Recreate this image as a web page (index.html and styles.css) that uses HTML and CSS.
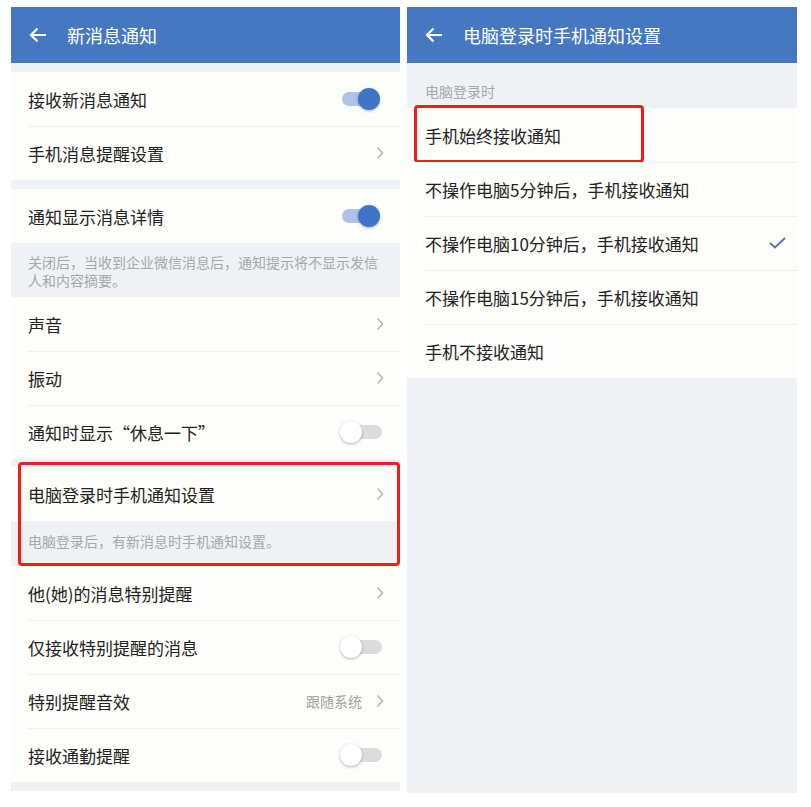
FILE: index.html
```html
<!DOCTYPE html>
<html lang="zh-CN">
<head>
    <meta charset="UTF-8">
    <title>新消息通知</title>
    <link rel="stylesheet" href="styles.css">
</head>
<body>
<div class="screens">

    <section class="phone phone-left">
        <header class="bar">
            <svg class="back" width="18" height="16" viewBox="0 0 18 16"><path d="M17 8H2M8.5 1.5L2 8l6.5 6.5" fill="none" stroke="#fff" stroke-width="2.2"/></svg>
            <span>新消息通知</span>
        </header>

        <div class="group">
            <div class="row"><span>接收新消息通知</span><span class="switch on"></span></div>
            <div class="row"><span>手机消息提醒设置</span><svg class="chev" width="8" height="14" viewBox="0 0 8 14"><path d="M1.5 1.5L6.5 7l-5 5.5" fill="none" stroke="#b8b8b8" stroke-width="1.5"/></svg></div>
        </div>

        <div class="group">
            <div class="row"><span>通知显示消息详情</span><span class="switch on"></span></div>
            <p class="note">关闭后，当收到企业微信消息后，通知提示将不显示发信人和内容摘要。</p>
            <div class="row"><span>声音</span><svg class="chev" width="8" height="14" viewBox="0 0 8 14"><path d="M1.5 1.5L6.5 7l-5 5.5" fill="none" stroke="#b8b8b8" stroke-width="1.5"/></svg></div>
            <div class="row"><span>振动</span><svg class="chev" width="8" height="14" viewBox="0 0 8 14"><path d="M1.5 1.5L6.5 7l-5 5.5" fill="none" stroke="#b8b8b8" stroke-width="1.5"/></svg></div>
            <div class="row"><span>通知时显示“休息一下”</span><span class="switch"></span></div>
        </div>

        <div class="group marked">
            <div class="row"><span>电脑登录时手机通知设置</span><svg class="chev" width="8" height="14" viewBox="0 0 8 14"><path d="M1.5 1.5L6.5 7l-5 5.5" fill="none" stroke="#b8b8b8" stroke-width="1.5"/></svg></div>
            <p class="note note-short">电脑登录后，有新消息时手机通知设置。</p>
        </div>

        <div class="group flush">
            <div class="row"><span>他(她)的消息特别提醒</span><svg class="chev" width="8" height="14" viewBox="0 0 8 14"><path d="M1.5 1.5L6.5 7l-5 5.5" fill="none" stroke="#b8b8b8" stroke-width="1.5"/></svg></div>
            <div class="row"><span>仅接收特别提醒的消息</span><span class="switch"></span></div>
            <div class="row"><span>特别提醒音效</span><span class="value">跟随系统<svg class="chev" width="8" height="14" viewBox="0 0 8 14"><path d="M1.5 1.5L6.5 7l-5 5.5" fill="none" stroke="#b8b8b8" stroke-width="1.5"/></svg></span></div>
            <div class="row"><span>接收通勤提醒</span><span class="switch"></span></div>
        </div>
    </section>

    <section class="phone phone-right">
        <header class="bar">
            <svg class="back" width="18" height="16" viewBox="0 0 18 16"><path d="M17 8H2M8.5 1.5L2 8l6.5 6.5" fill="none" stroke="#fff" stroke-width="2.2"/></svg>
            <span>电脑登录时手机通知设置</span>
        </header>

        <p class="label">电脑登录时</p>
        <div class="group flush">
            <div class="row marked-row"><span>手机始终接收通知</span></div>
            <div class="row"><span>不操作电脑5分钟后，手机接收通知</span></div>
            <div class="row"><span>不操作电脑10分钟后，手机接收通知</span><svg class="check" width="17" height="12" viewBox="0 0 17 12"><path d="M1 6l5 4.5L16 1" fill="none" stroke="#4a74b6" stroke-width="1.8"/></svg></div>
            <div class="row"><span>不操作电脑15分钟后，手机接收通知</span></div>
            <div class="row"><span>手机不接收通知</span></div>
        </div>
    </section>

</div>
</body>
</html>
```

FILE: styles.css
```css
body {
    margin: 0;
    background-color: #fff;
    font-family: "Noto Sans CJK SC", "Noto Sans", sans-serif;
    color: #222;
}

.screens {
    display: flex;
    gap: 7px;
    padding: 7px 0 0 11px;
}

.phone {
    width: 389px;
    background-color: #eff2f5;
}

.phone-left {
    height: 784px;
}

.phone-right {
    width: 390px;
    height: 786px;
}

.bar {
    height: 56px;
    background-color: #4678c2;
    color: #fff;
    display: flex;
    align-items: center;
    font-size: 18px;
    padding-left: 18px;
    box-sizing: border-box;
}

.bar .back {
    margin-right: 20px;
}

.group {
    margin-top: 9px;
}

.group.marked {
    margin-top: 8px;
    position: relative;
}

.group.flush {
    margin-top: 0;
}

.row {
    position: relative;
    height: 54px;
    box-sizing: border-box;
    display: flex;
    align-items: center;
    justify-content: space-between;
    padding: 0 16px 0 17px;
    background-color: #fdfdf9;
    font-size: 17px;
}

.row + .row::before {
    content: "";
    position: absolute;
    left: 17px;
    right: 0;
    top: 0;
    height: 1px;
    background-color: #efefeb;
}

.chev {
    display: block;
}

.value {
    display: flex;
    align-items: center;
    gap: 14px;
    font-size: 14px;
    color: #a3a3a3;
}

.note {
    margin: 0;
    padding: 10px 16px 8px 17px;
    font-size: 14px;
    line-height: 18px;
    color: #a4a7ab;
}

.note-short {
    padding: 11px 16px 16px 17px;
}

.label {
    margin: 0;
    height: 45px;
    box-sizing: border-box;
    padding: 19px 0 0 18px;
    font-size: 14px;
    line-height: 18px;
    color: #a4a7ab;
}

.phone-right .row {
    padding: 0 11px 0 18px;
}

.phone-right .row + .row::before {
    left: 18px;
}

.check {
    display: block;
}

/* toggle switch */
.switch {
    position: relative;
    width: 42px;
    height: 22px;
    margin-right: 2px;
}

.switch::before {
    content: "";
    position: absolute;
    left: 2px;
    right: 0;
    top: 4px;
    height: 14px;
    border-radius: 7px;
    background-color: #dcdcdc;
}

.switch::after {
    content: "";
    position: absolute;
    left: 0;
    top: 0;
    width: 22px;
    height: 22px;
    border-radius: 50%;
    background-color: #fff;
    box-shadow: 0 1px 3px rgba(0,0,0,0.3);
}

.switch.on::before {
    background-color: #aec4e6;
    right: 4px;
}

.switch.on::after {
    left: auto;
    right: 2px;
    background-color: #3f75c9;
}

/* red annotation frames */
.group.marked::after {
    content: "";
    position: absolute;
    top: -5px;
    bottom: 0;
    left: 7px;
    right: 0;
    border: 3px solid #f01d1d;
    border-radius: 4px;
}

.marked-row::after {
    content: "";
    position: absolute;
    top: -3px;
    bottom: -1px;
    left: 7px;
    width: 230px;
    box-sizing: border-box;
    border: 3px solid #f01d1d;
    border-radius: 4px;
}
```
